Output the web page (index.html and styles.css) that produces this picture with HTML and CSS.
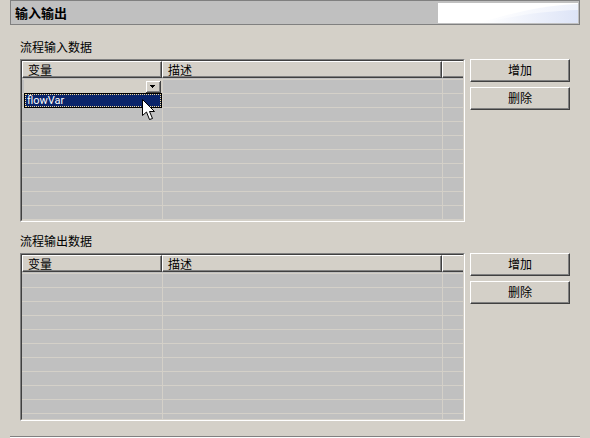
FILE: index.html
```html
<!DOCTYPE html>
<html lang="zh-CN">
<head>
<meta charset="utf-8">
<title>输入输出</title>
<link rel="stylesheet" href="styles.css">
</head>
<body>
<main class="page">
  <header class="titlebar">
    <h1>输入输出</h1>
    <svg class="banner" viewBox="0 0 140 20" preserveAspectRatio="none" aria-hidden="true">
      <defs>
        <linearGradient id="sweep" x1="0" x2="1" y1="0" y2="0">
          <stop offset="0" stop-color="#ffffff"/>
          <stop offset="1" stop-color="#dde4f7"/>
        </linearGradient>
      </defs>
      <rect width="140" height="20" fill="#fff"/>
      <path d="M40 20C75 10 105 2 140 1V20Z" fill="url(#sweep)" opacity=".5"/>
      <path d="M45 20C75 13 105 8 140 7V20Z" fill="url(#sweep)"/>
    </svg>
  </header>

  <section class="group">
    <h2 id="inputs">流程输入数据</h2>
    <div class="row">
      <div class="grid-frame">
        <table aria-labelledby="inputs">
          <colgroup><col class="col-name"><col><col class="col-rest"></colgroup>
          <thead><tr><th><span>变量</span></th><th><span>描述</span></th><th><span></span></th></tr></thead>
          <tbody>
            <tr>
              <td class="editing">
                <div class="combo">
                  <select aria-label="变量"><option value="" selected></option><option>flowVar</option></select>
                  <svg class="arrow" viewBox="0 0 15 12" aria-hidden="true" shape-rendering="crispEdges">
                    <path d="M0 0H15V12H0Z" fill="#d4d0c8"/>
                    <path d="M0 0H14V1H1V11H0Z" fill="#fff"/>
                    <path d="M14 0H15V12H0V11H14Z" fill="#404040"/>
                    <path d="M13 1H14V11H1V10H13Z" fill="#808080"/>
                    <path d="M4 4H9V5H4ZM5 5H8V6H5ZM6 6H7V7H6Z" fill="#000"/>
                  </svg>
                  <ul class="options" role="listbox" aria-label="变量"><li role="option" aria-selected="true">flowVar</li></ul>
                  <svg class="pointer" viewBox="0 0 13 21" aria-hidden="true">
                    <path d="M.5 .5V16.5L4.5 13L7.5 20.5L10.5 19.5L7.5 12.5H12.5Z" fill="#fff" stroke="#000"/>
                  </svg>
                </div>
              </td><td></td><td></td>
            </tr>
            <tr><td></td><td></td><td></td></tr>
            <tr><td></td><td></td><td></td></tr>
            <tr><td></td><td></td><td></td></tr>
            <tr><td></td><td></td><td></td></tr>
            <tr><td></td><td></td><td></td></tr>
            <tr><td></td><td></td><td></td></tr>
            <tr><td></td><td></td><td></td></tr>
            <tr><td></td><td></td><td></td></tr>
            <tr><td></td><td></td><td></td></tr>
          </tbody>
        </table>
      </div>
      <div class="actions">
        <button type="button">增加</button>
        <button type="button">删除</button>
      </div>
    </div>
  </section>

  <section class="group">
    <h2 id="outputs">流程输出数据</h2>
    <div class="row">
      <div class="grid-frame">
        <table aria-labelledby="outputs">
          <colgroup><col class="col-name"><col><col class="col-rest"></colgroup>
          <thead><tr><th><span>变量</span></th><th><span>描述</span></th><th><span></span></th></tr></thead>
          <tbody>
            <tr><td></td><td></td><td></td></tr>
            <tr><td></td><td></td><td></td></tr>
            <tr><td></td><td></td><td></td></tr>
            <tr><td></td><td></td><td></td></tr>
            <tr><td></td><td></td><td></td></tr>
            <tr><td></td><td></td><td></td></tr>
            <tr><td></td><td></td><td></td></tr>
            <tr><td></td><td></td><td></td></tr>
            <tr><td></td><td></td><td></td></tr>
            <tr><td></td><td></td><td></td></tr>
            <tr class="partial"><td></td><td></td><td></td></tr>
          </tbody>
        </table>
      </div>
      <div class="actions">
        <button type="button">增加</button>
        <button type="button">删除</button>
      </div>
    </div>
  </section>
  <hr>
</main>
</body>
</html>
```
FILE: styles.css
```css
* { box-sizing: border-box; }

body {
  margin: 0;
  background: #d4d0c8;
  color: #000;
  font: 12px/16px "Noto Sans CJK SC", sans-serif;
}

.page { padding: 0 10px; }

.titlebar {
  display: flex;
  align-items: center;
  justify-content: space-between;
  height: 25px;
  padding: 0 1px 0 4px;
  background: #c0c0c0;
  border: 1px solid #808080;
}

h1 { margin: 0; font-size: 13px; line-height: 16px; }

.banner { display: block; width: 140px; height: 20px; }

.group { padding: 14px 10px 0; }
.group + .group { padding-top: 11px; }

h2 { margin: 0 0 4px; font-size: 12px; font-weight: 400; line-height: 16px; }

.row { display: flex; align-items: flex-start; gap: 5px; }

.grid-frame {
  flex: 1;
  min-width: 0;
  border: 1px solid;
  border-color: #808080 #fff #fff #808080;
}

table {
  width: 100%;
  table-layout: fixed;
  border-collapse: separate;
  border-spacing: 0;
  border: 1px solid;
  border-color: #404040 #d4d0c8 #d4d0c8 #404040;
  background: #c0c0c0;
}

.col-name { width: 140px; }
.col-rest { width: 21px; }

th { height: 18px; padding: 0 0 1px; font-weight: 400; text-align: left; }

th span {
  display: block;
  height: 17px;
  padding-left: 5px;
  line-height: 15px;
  border: 1px solid;
  border-color: #fff #404040 #404040 #fff;
  background: #d4d0c8;
  box-shadow: inset -1px -1px #808080;
}

th:last-child span { border-right: 0; box-shadow: inset 0 -1px #808080; }

td { height: 14px; padding: 0; border-bottom: 1px solid #d4d0c8; }
td + td { border-left: 1px solid #d4d0c8; }
tbody tr:first-child td { height: 15px; border-top: 1px solid #d4d0c8; }
.partial td { height: 5px; border-bottom: 0; }

.editing { padding-left: 2px; }
.combo { position: relative; height: 13px; background: #d4d0c8; }

select {
  appearance: none;
  display: block;
  width: 100%;
  height: 13px;
  padding: 0 16px 0 2px;
  border: 0;
  border-radius: 0;
  background: #d4d0c8;
  font: 11px/13px Roboto, sans-serif;
}

.arrow {
  position: absolute;
  top: 1px;
  right: 1px;
  width: 15px;
  height: 12px;
  pointer-events: none;
}

.options {
  position: absolute;
  top: 13px;
  left: 0;
  z-index: 1;
  width: 100%;
  margin: 0;
  padding: 0;
  border: 1px solid #000;
  list-style: none;
}

.options li {
  height: 13px;
  padding-left: 1px;
  border: 1px dotted #f5db95;
  background: #0a246a;
  color: #fff;
  font: 11px/11px Roboto, sans-serif;
}

.pointer {
  position: absolute;
  top: 19px;
  left: 118px;
  z-index: 2;
  width: 13px;
  height: 21px;
  pointer-events: none;
}

.actions { display: flex; flex-direction: column; gap: 5px; width: 100px; }

button {
  height: 23px;
  padding: 0 0 2px;
  border: 1px solid;
  border-color: #fff #404040 #404040 #fff;
  border-radius: 0;
  background: #d4d0c8;
  box-shadow: inset -1px -1px #808080;
  color: #000;
  font: 12px/16px "Noto Sans CJK SC", sans-serif;
}

hr { margin: 15px 0 0; border: 0; border-top: 1px solid #808080; border-bottom: 1px solid #fff; }
```
